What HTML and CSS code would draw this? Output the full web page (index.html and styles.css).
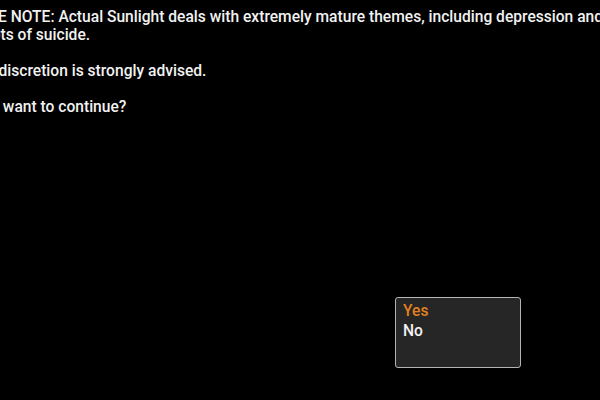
FILE: index.html
```html
<!DOCTYPE html>
<html lang="en">
<head>
  <meta charset="UTF-8">
  <meta name="viewport" content="width=device-width, initial-scale=1.0">
  <title>Content Warning</title>
  <link rel="stylesheet" href="styles.css">
</head>
<body>
  <div class="screen">
    <!-- Warning text -->
    <div class="notice">
      <p>PLEASE NOTE: Actual Sunlight deals with extremely mature themes, including depression and<br>attempts of suicide.</p>
      <p>Player discretion is strongly advised.</p>
      <p>Do you want to continue?</p>
    </div>

    <!-- Choice menu -->
    <ul class="choice-menu">
      <li class="choice selected">Yes</li>
      <li class="choice">No</li>
    </ul>
  </div>
</body>
</html>
```

FILE: styles.css
```css
/* General Styles */
html,
body {
  margin: 0;
  padding: 0;
  background-color: #000;
  overflow: hidden;
}

body {
  font-family: Roboto, "Noto Sans", sans-serif;
  font-weight: 500;
  font-size: 15.6px;
  color: #f2f2f2;
}

.screen {
  width: 600px;
  height: 400px;
  padding-top: 8px;
  box-sizing: border-box;
}

/* Warning text */
.notice {
  margin-left: -49px;
  white-space: nowrap;
  line-height: 18px;
}

.notice p {
  margin: 0 0 18px 0;
}

/* Choice menu */
.choice-menu {
  list-style: none;
  margin: 181px 0 0 395px;
  padding: 3px 7px;
  width: 126px;
  height: 71px;
  box-sizing: border-box;
  background-color: #262626;
  border: 1px solid #b4b4b4;
  border-radius: 3px;
}

.choice {
  line-height: 20px;
  color: #f2f2f2;
}

.choice.selected {
  color: #e3801f;
}
```
